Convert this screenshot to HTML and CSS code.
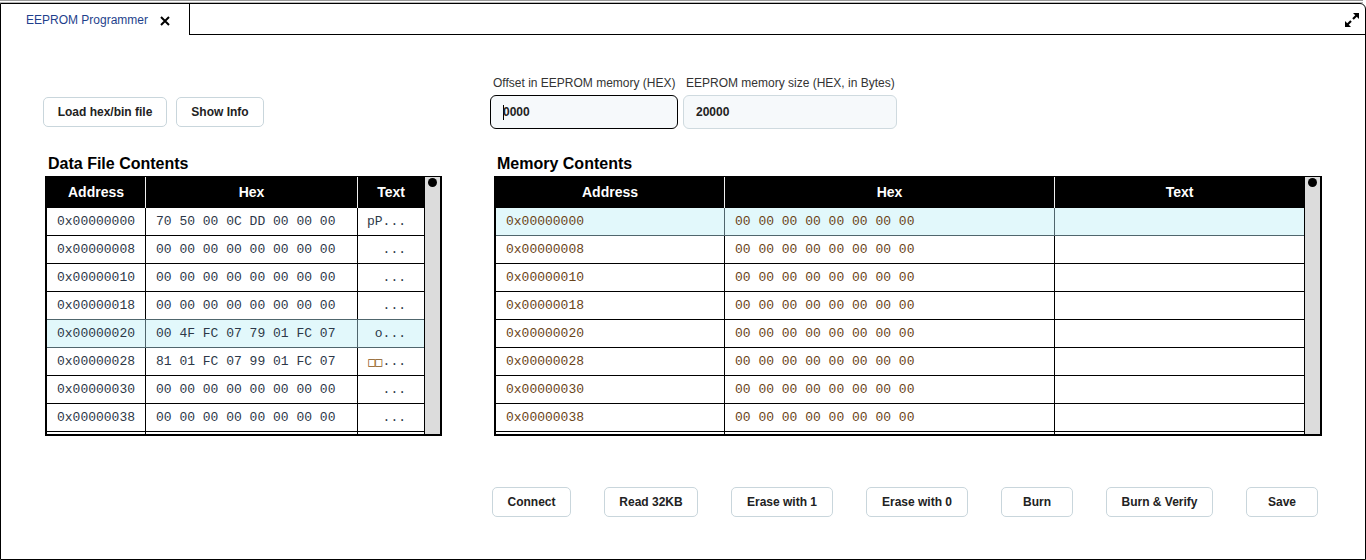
FILE: index.html
```html
<!DOCTYPE html>
<html>
<head>
<meta charset="utf-8">
<title>EEPROM Programmer</title>
<link rel="stylesheet" href="styles.css">
</head>
<body>
<div class="topline"></div>
<div class="window">
  <div class="tabbar">
    <div class="tab">
      <span class="tab-title">EEPROM Programmer</span>
      <svg class="tab-close" width="10" height="10" viewBox="0 0 10 10"><path d="M1 1L9 9M9 1L1 9" stroke="#000" stroke-width="2"/></svg>
    </div>
    <div class="tabfill">
      <svg class="expand" width="16" height="16" viewBox="0 0 16 16">
        <polygon points="9,1 15,1 15,7" fill="#000"/>
        <path d="M13.5 2.5L9 7" stroke="#000" stroke-width="2.2"/>
        <polygon points="1,9 1,15 7,15" fill="#000"/>
        <path d="M2.5 13.5L7 9" stroke="#000" stroke-width="2.2"/>
      </svg>
    </div>
  </div>

  <div class="main">
    <div class="controls-left">
      <button class="btn w124">Load hex/bin file</button>
      <button class="btn w88">Show Info</button>
    </div>
    <div class="controls-right">
      <div class="field f1">
        <label class="lbl">Offset in EEPROM memory (HEX)</label>
        <div class="input focused"><span class="caret"></span>0000</div>
      </div>
      <div class="field f2">
        <label class="lbl">EEPROM memory size (HEX, in Bytes)</label>
        <div class="input">20000</div>
      </div>
    </div>

    <div class="panel">
      <h2 class="heading">Data File Contents</h2>
      <div class="tablebox">
        <div class="grid data">
          <div class="row head"><div class="c">Address</div><div class="c">Hex</div><div class="c">Text</div></div>
          <div class="row"><div class="c">0x00000000</div><div class="c">70 50 00 0C DD 00 00 00</div><div class="c t">pP...</div></div>
          <div class="row"><div class="c">0x00000008</div><div class="c">00 00 00 00 00 00 00 00</div><div class="c t">...</div></div>
          <div class="row"><div class="c">0x00000010</div><div class="c">00 00 00 00 00 00 00 00</div><div class="c t">...</div></div>
          <div class="row"><div class="c">0x00000018</div><div class="c">00 00 00 00 00 00 00 00</div><div class="c t">...</div></div>
          <div class="row sel"><div class="c">0x00000020</div><div class="c">00 4F FC 07 79 01 FC 07</div><div class="c t">o...</div></div>
          <div class="row"><div class="c">0x00000028</div><div class="c">81 01 FC 07 99 01 FC 07</div><div class="c t"><span class="box">□□</span>...</div></div>
          <div class="row"><div class="c">0x00000030</div><div class="c">00 00 00 00 00 00 00 00</div><div class="c t">...</div></div>
          <div class="row"><div class="c">0x00000038</div><div class="c">00 00 00 00 00 00 00 00</div><div class="c t">...</div></div>
          <div class="row"><div class="c"></div><div class="c"></div><div class="c t"></div></div>
        </div>
        <div class="scrollbar"><span class="dot"></span></div>
      </div>
    </div>

    <div class="panel">
      <h2 class="heading">Memory Contents</h2>
      <div class="tablebox">
        <div class="grid mem">
          <div class="row head"><div class="c">Address</div><div class="c">Hex</div><div class="c">Text</div></div>
          <div class="row sel"><div class="c">0x00000000</div><div class="c">00 00 00 00 00 00 00 00</div><div class="c"></div></div>
          <div class="row"><div class="c">0x00000008</div><div class="c">00 00 00 00 00 00 00 00</div><div class="c"></div></div>
          <div class="row"><div class="c">0x00000010</div><div class="c">00 00 00 00 00 00 00 00</div><div class="c"></div></div>
          <div class="row"><div class="c">0x00000018</div><div class="c">00 00 00 00 00 00 00 00</div><div class="c"></div></div>
          <div class="row"><div class="c">0x00000020</div><div class="c">00 00 00 00 00 00 00 00</div><div class="c"></div></div>
          <div class="row"><div class="c">0x00000028</div><div class="c">00 00 00 00 00 00 00 00</div><div class="c"></div></div>
          <div class="row"><div class="c">0x00000030</div><div class="c">00 00 00 00 00 00 00 00</div><div class="c"></div></div>
          <div class="row"><div class="c">0x00000038</div><div class="c">00 00 00 00 00 00 00 00</div><div class="c"></div></div>
          <div class="row"><div class="c"></div><div class="c"></div><div class="c"></div></div>
        </div>
        <div class="scrollbar"><span class="dot"></span></div>
      </div>
    </div>

    <div class="spacer"></div>
    <div class="actions">
      <button class="btn w79">Connect</button>
      <button class="btn w94">Read 32KB</button>
      <button class="btn w102">Erase with 1</button>
      <button class="btn w102">Erase with 0</button>
      <button class="btn w72">Burn</button>
      <button class="btn w107">Burn &amp; Verify</button>
      <button class="btn w72">Save</button>
    </div>
  </div>
</div>
</body>
</html>
```
FILE: styles.css
```css
html, body {
  margin: 0;
  padding: 0;
  background: #fff;
}
body {
  font-family: "Liberation Sans", Arial, sans-serif;
  color: #222;
  width: 1366px;
  height: 560px;
  overflow: hidden;
}
.topline {
  height: 3px;
  box-sizing: border-box;
  border-top: 1px solid #9a9a9a;
  border-bottom: 1px solid #b8b8b8;
  margin-right: 3px;
}
.window {
  width: 1366px;
  height: 557px;
  box-sizing: border-box;
  border: 1px solid #000;
  border-top-right-radius: 6px;
  display: flex;
  flex-direction: column;
}
.tabbar {
  display: flex;
  height: 31px;
  flex: none;
}
.tab {
  width: 189px;
  box-sizing: border-box;
  border-right: 1px solid #000;
  display: flex;
  align-items: center;
  padding-left: 25px;
  padding-top: 1px;
}
.tab-title {
  font-size: 12px;
  color: #1e3f8c;
}
.tab-close {
  margin-left: 12px;
  margin-top: 1px;
}
.tabfill {
  flex: 1;
  border-bottom: 1px solid #000;
  display: flex;
  justify-content: flex-end;
  align-items: center;
  padding-right: 5px;
}
.expand {
  margin-top: 1px;
}

.main {
  flex: 1;
  display: grid;
  grid-template-columns: 397px 828px;
  grid-template-rows: auto auto 1fr auto;
  column-gap: 52px;
  padding: 40px 44px 0;
}
.controls-left {
  display: flex;
  gap: 9px;
  align-self: end;
  margin-left: -2px;
  margin-bottom: 2px;
}
.controls-right {
  display: flex;
  gap: 5px;
  margin-left: -4px;
}
.field {
  display: flex;
  flex-direction: column;
}
.f1 { width: 188px; }
.f2 { width: 214px; }
.lbl {
  font-size: 12px;
  line-height: 15px;
  color: #333;
  padding-left: 3px;
  padding-top: 1px;
  margin-bottom: 4px;
  white-space: nowrap;
}
.input {
  height: 34px;
  box-sizing: border-box;
  border: 1px solid #cfdadf;
  border-radius: 6px;
  background: #f6f9fb;
  font-size: 12px;
  font-weight: bold;
  color: #222;
  display: flex;
  align-items: center;
  padding-left: 12px;
}
.input.focused {
  border-color: #000;
}
.caret {
  display: inline-block;
  width: 1px;
  height: 15px;
  background: #000;
  margin-right: -1px;
}

.btn {
  height: 30px;
  box-sizing: border-box;
  border: 1px solid #c9d6dc;
  border-radius: 5px;
  background: #fff;
  font-family: "Liberation Sans", Arial, sans-serif;
  font-size: 12px;
  font-weight: bold;
  color: #222;
  padding: 0;
  text-align: center;
  white-space: nowrap;
  cursor: pointer;
}
.w72 { width: 72px; }
.w79 { width: 79px; }
.w88 { width: 88px; }
.w94 { width: 94px; }
.w102 { width: 102px; }
.w107 { width: 107px; }
.w124 { width: 124px; }

.panel {
  margin-top: 25px;
}
.heading {
  margin: 0 0 3px 3px;
  font-size: 16px;
  line-height: 19px;
  font-weight: bold;
  color: #000;
}
.tablebox {
  height: 260px;
  box-sizing: border-box;
  border: 2px solid #000;
  border-top-width: 1px;
  display: flex;
  overflow: hidden;
}
.grid {
  flex: 1;
  overflow: hidden;
  font-family: "Liberation Mono", "Courier New", monospace;
  font-size: 13px;
}
.row {
  display: grid;
  height: 28px;
  box-sizing: border-box;
  border-bottom: 1px solid #000;
}
.data .row { grid-template-columns: 99px 212px 1fr; }
.mem .row { grid-template-columns: 229px 330px 1fr; }
.c {
  border-right: 1px solid #000;
  display: flex;
  align-items: center;
  padding-left: 10px;
  white-space: nowrap;
}
.c:last-child { border-right: none; }
.data .c { color: #2d3848; }
.mem .c { color: #6a4418; }
.c.t {
  justify-content: flex-end;
  padding-right: 18px;
  padding-left: 0;
}
.box {
  font-family: "DejaVu Sans Mono", monospace;
  color: #8a5410;
  font-size: 12px;
}
.row.head {
  height: 31px;
  background: #000;
  border-bottom: none;
  font-family: "Liberation Sans", Arial, sans-serif;
  font-size: 14px;
  font-weight: bold;
}
.row.head .c {
  color: #fff;
  justify-content: center;
  padding: 0 0 1px;
  border-right-color: #f0f0f0;
}
.row.sel {
  background: #e2f8fb;
  border-top: 1px solid #50666d;
  border-bottom-color: #50666d;
  margin-top: -1px;
  height: 29px;
}
.row.sel .c { border-right-color: #50666d; }
.row.head + .row.sel {
  border-top: none;
  margin-top: 0;
  height: 28px;
}
.scrollbar {
  width: 15px;
  flex: none;
  background: #dcdcdc;
  border-left: 1px solid #000;
  display: flex;
  justify-content: center;
  align-items: flex-start;
}
.dot {
  width: 9px;
  height: 9px;
  border-radius: 50%;
  background: #000;
  margin-top: 1px;
}
.actions {
  grid-column: 2;
  display: flex;
  gap: 33px;
  margin-left: -2px;
  margin-bottom: 42px;
}
.spacer { grid-column: 1 / 3; }
```
